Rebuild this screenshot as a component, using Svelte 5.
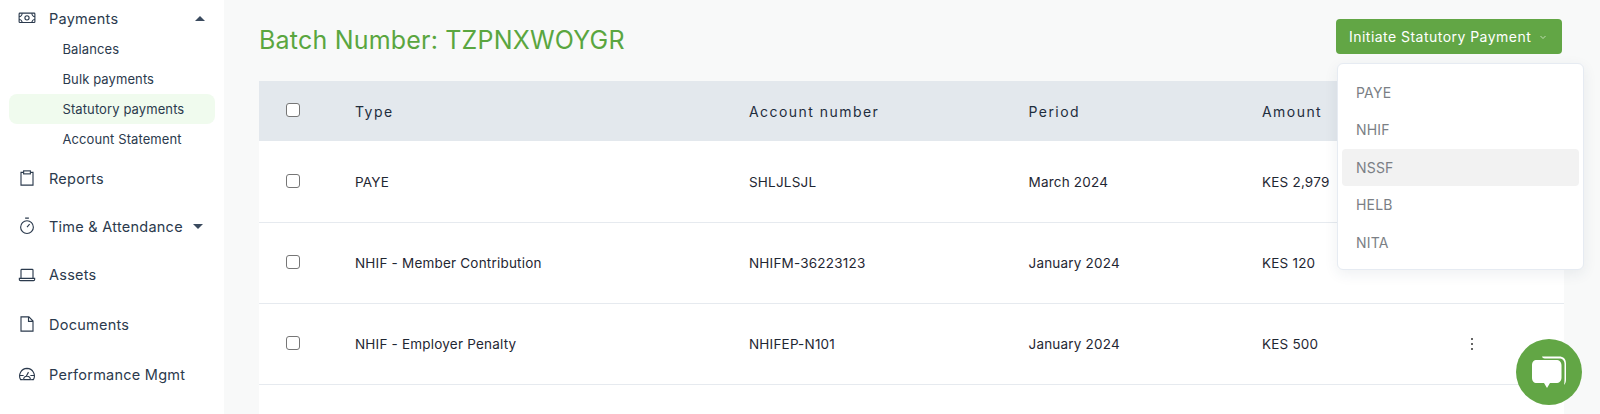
<script>
	// Table rows
	const rows = [
		{ type: 'PAYE', account: 'SHLJLSJL', period: 'March 2024', amount: 'KES 2,979' },
		{ type: 'NHIF - Member Contribution', account: 'NHIFM-36223123', period: 'January 2024', amount: 'KES 120' },
		{ type: 'NHIF - Employer Penalty', account: 'NHIFEP-N101', period: 'January 2024', amount: 'KES 500' }
	];
	const subItems = ['Balances', 'Bulk payments', 'Statutory payments', 'Account Statement'];
	const options = ['PAYE', 'NHIF', 'NSSF', 'HELB', 'NITA'];
</script>

<div class="page">
	<aside class="sidebar">
		<div class="navItem first">
			<svg class="navIcon" viewBox="0 0 24 24"><rect x="1.500" y="5.500" width="21" height="12.500" rx="1"/><circle cx="12" cy="11.800" r="2.800"/><path d="M1.500 10c2 0 4-2 4-4.500M22.500 10c-2 0-4-2-4-4.500M1.500 14c2 0 4 2 4 4M22.500 14c-2 0-4 2-4 4"/></svg>
			<span>Payments</span>
			<span class="caret up"></span>
		</div>
		<div class="subList">
			{#each subItems as item}
				<div class="subItem" class:active={item === 'Statutory payments'}>{item}</div>
			{/each}
		</div>
		<div class="navItem">
			<svg class="navIcon" viewBox="0 0 24 24"><path d="M7 4.500H4v17h16v-17h-3"/><rect x="7.500" y="2.500" width="9" height="4"/></svg>
			<span>Reports</span>
		</div>
		<div class="navItem">
			<svg class="navIcon" viewBox="0 0 24 24"><circle cx="12" cy="13.500" r="8.500"/><path d="M9.500 1.500h5M12 13.500l3.500-4"/></svg>
			<span>Time &amp; Attendance</span>
			<span class="caret down"></span>
		</div>
		<div class="navItem assets">
			<svg class="navIcon" viewBox="0 0 24 24"><path d="M4 16.500V5.500a1 1 0 0 1 1-1h14a1 1 0 0 1 1 1v11M1.800 16.500h20.400V18a1.500 1.500 0 0 1-1.500 1.500H3.300A1.500 1.500 0 0 1 1.800 18z"/></svg>
			<span>Assets</span>
		</div>
		<div class="navItem tall">
			<svg class="navIcon" viewBox="0 0 24 24"><path d="M4 2.500h10.500L20 8v13.500H4zM14 2.500V8.500h6"/></svg>
			<span>Documents</span>
		</div>
		<div class="navItem tall">
			<svg class="navIcon" viewBox="0 0 24 24"><path d="M6.500 19.500H3.500A10 10 0 0 1 12 4.500a10 10 0 0 1 8.500 15H17.500M2.500 14H7.500M16.500 14h5M14 9.500 11 15M7.500 19.500a4.500 4.500 0 0 1 9 0z"/></svg>
			<span>Performance Mgmt</span>
		</div>
	</aside>

	<main class="content">
		<header class="topBar">
			<h1>Batch Number: TZPNXWOYGR</h1>
			<div class="actions">
				<button class="initiate">
					Initiate Statutory Payment
					<svg viewBox="0 0 10 10"><path d="M2.500 4 5 6.500 7.500 4"/></svg>
				</button>
				<div class="menu">
					{#each options as option}
						<div class="option" class:hover={option === 'NSSF'}>{option}</div>
					{/each}
				</div>
			</div>
		</header>

		<section class="card">
			<div class="row head">
				<span class="checkbox"></span>
				<span>Type</span>
				<span>Account number</span>
				<span>Period</span>
				<span>Amount</span>
				<span></span>
			</div>
			{#each rows as row}
				<div class="row">
					<span class="checkbox"></span>
					<span>{row.type}</span>
					<span>{row.account}</span>
					<span>{row.period}</span>
					<span>{row.amount}</span>
					<span class="kebab"><i></i><i></i><i></i></span>
				</div>
			{/each}
		</section>
	</main>

	<div class="chat">
		<svg viewBox="0 0 66 66">
			<path d="M26 17.500h17c4.500 0 7 2.500 7 7v16c0 2-.5 4-2 5.500 .3-1.500 .5-3.500 .5-5.500V25c0-3.500-2-5.500-5.500-5.500H30c-1.500 0-3.500 0-4-2z"/>
			<path d="M21 21h19c3.500 0 5.500 2 5.500 5.500v12c0 3.500-2 5.500-5.500 5.500h-6l-3 5-3-5h-7c-3.500 0-5-2-5-5.500v-12C16 23 17.500 21 21 21z"/>
		</svg>
	</div>
</div>

<style>
	:global(body) {
		margin: 0;
		font-family: Inter, "Noto Sans", sans-serif;
		overflow: hidden;
	}

	.page {
		position: relative;
		display: flex;
		height: 414px;
		overflow: hidden;
		background-color: #f8f9f9;
	}

	.sidebar {
		flex: 0 0 224px;
		background-color: #fff;
		color: #2b3a4d;
	}

	.navItem {
		display: flex;
		align-items: center;
		height: 48px;
		padding-left: 18px;
		font-size: 14.5px;
		letter-spacing: .25px;
	}

	.navItem.first {
		height: 36px;
	}

	.navItem.assets {
		height: 49px;
	}

	.navItem.tall {
		height: 50px;
	}

	.navIcon {
		flex: none;
		width: 18px;
		height: 18px;
		margin-right: 13px;
		fill: none;
		stroke: #2b3a4d;
		stroke-width: 1.5;
	}

	.caret {
		margin-left: auto;
		margin-right: 19px;
		border-left: 5px solid transparent;
		border-right: 5px solid transparent;
	}

	.caret.up {
		border-bottom: 5px solid #3a4a5e;
	}

	.caret.down {
		margin-left: 10px;
		border-top: 5px solid #3a4a5e;
	}

	.subList {
		display: flex;
		flex-direction: column;
		margin-top: -2px;
	}

	.subItem {
		display: flex;
		align-items: center;
		height: 30px;
		margin: 0 9px;
		padding-left: 53.5px;
		font-size: 13px;
		letter-spacing: .1px;
		border-radius: 8px;
	}

	.subItem.active {
		background-color: #f0fbee;
	}

	.content {
		flex: 1;
		padding: 0 36px 0 35px;
		min-width: 0;
	}

	.topBar {
		display: flex;
		align-items: center;
		justify-content: space-between;
		box-sizing: border-box;
		height: 81px;
		padding-bottom: 2px;
	}

	h1 {
		margin: 0;
		font-size: 25px;
		font-weight: 400;
		letter-spacing: .2px;
		color: #5aa63f;
	}

	.actions {
		position: relative;
		align-self: flex-start;
		margin-top: 19px;
		margin-right: 2px;
	}

	.initiate {
		display: flex;
		align-items: center;
		gap: 7px;
		width: 226px;
		height: 35px;
		padding: 0 13px;
		font: inherit;
		font-size: 14px;
		letter-spacing: .47px;
		white-space: nowrap;
		color: #fff;
		background-color: #62a645;
		border: none;
		border-radius: 4px;
	}

	.initiate svg {
		width: 10px;
		height: 10px;
		fill: none;
		stroke: #d5e8cc;
		stroke-width: .8;
	}

	.menu {
		position: absolute;
		top: 44px;
		left: 1px;
		z-index: 2;
		box-sizing: border-box;
		width: 247px;
		height: 207px;
		padding: 9.5px 4px;
		background-color: #fff;
		border: 1px solid #e6ebf2;
		border-radius: 6px;
		box-shadow: 0 4px 14px rgba(40, 60, 90, .08);
	}

	.option {
		display: flex;
		align-items: center;
		height: 37.5px;
		padding-left: 14px;
		font-size: 14px;
		letter-spacing: .2px;
		color: #7b7f85;
		border-radius: 4px;
	}

	.option.hover {
		background-color: #f2f2f2;
	}

	.card {
		height: 333px;
		background-color: #fff;
	}

	.row {
		display: grid;
		grid-template-columns: 96px 394px 279.5px 233.5px 209px 1fr;
		align-items: center;
		box-sizing: border-box;
		height: 81px;
		font-size: 13.5px;
		letter-spacing: .2px;
		color: #1f2733;
		border-bottom: 1px solid #e6eaef;
	}

	.row.head {
		height: 60px;
		margin-bottom: 1px;
		font-size: 14px;
		letter-spacing: 1.45px;
		color: #1f2d3d;
		background-color: #e3e8ed;
		border-bottom: none;
	}

	.checkbox {
		box-sizing: border-box;
		width: 14px;
		height: 14px;
		margin-left: 27px;
		margin-bottom: 3px;
		background-color: #fff;
		border: 1px solid #767676;
		border-radius: 3px;
	}

	.kebab {
		display: flex;
		flex-direction: column;
		gap: 3px;
		width: 2px;
	}

	.kebab i {
		width: 2px;
		height: 2px;
		background-color: #333;
		border-radius: 50%;
	}

	.chat {
		position: absolute;
		left: 1516px;
		top: 339px;
		z-index: 3;
		width: 66px;
		height: 66px;
		background-color: #62a645;
		border-radius: 50%;
	}

	.chat svg {
		display: block;
		width: 66px;
		height: 66px;
		fill: #fff;
	}
</style>
